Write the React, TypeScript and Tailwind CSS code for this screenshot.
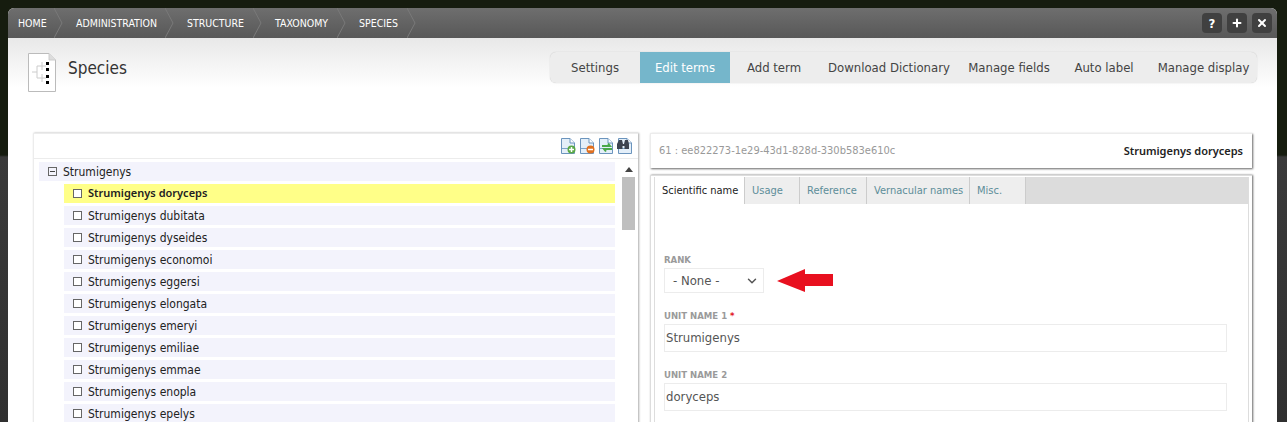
import { ChevronDown, Plus, X } from "lucide-react";

const crumbs = ["HOME", "ADMINISTRATION", "STRUCTURE", "TAXONOMY", "SPECIES"];
const crumbWidths = ["w-[58px]", "w-[111px]", "w-[88px]", "w-[84px]", "w-[70px]"];
const actions = [
    { label: "Settings", width: "w-[90px]" },
    { label: "Edit terms", width: "w-[90px]", active: true },
    { label: "Add term", width: "w-[88px]" },
    { label: "Download Dictionary", width: "w-[142px]" },
    { label: "Manage fields", width: "w-[98px]" },
    { label: "Auto label", width: "w-[92px]" },
    { label: "Manage display", width: "w-[107px]" },
];
const species = [
    "Strumigenys doryceps",
    "Strumigenys dubitata",
    "Strumigenys dyseides",
    "Strumigenys economoi",
    "Strumigenys eggersi",
    "Strumigenys elongata",
    "Strumigenys emeryi",
    "Strumigenys emiliae",
    "Strumigenys emmae",
    "Strumigenys enopla",
    "Strumigenys epelys",
];
const tabs = [
    { label: "Scientific name", width: "w-[90px]", active: true },
    { label: "Usage", width: "w-[55px]" },
    { label: "Reference", width: "w-[67px]" },
    { label: "Vernacular names", width: "w-[103px]" },
    { label: "Misc.", width: "w-[56px]" },
];
const selectedName = "font-['Noto_Sans'] text-[11px] font-semibold";

const DocIcon = ({ children }: { children: React.ReactNode }) => (
    <svg width="16" height="16" viewBox="0 0 16 16">
        <path d="M1.5 .5H10L14.5 5V15.5H1.5Z" fill="#e4eff9" stroke="#6b94bd" />
        <path d="M10 .5V5H14.5" fill="#fff" stroke="#6b94bd" />
        <rect x="2" y="10" width="8" height="1" fill="#7ba4cc" />
        {children}
    </svg>
);

const Field = ({ label, value, required }: { label: string; value: string; required?: boolean }) => (
    <div className="mb-[15px]">
        <div className="h-[14px] text-[9.5px] leading-[16px] font-bold text-[#9a9a9a]">
            {label}
            {required && <span className="text-[#e01020]"> *</span>}
        </div>
        <div className="mt-[2px] flex h-[28px] w-[563px] items-center border border-[#ececec] pl-[1px] text-[13px] text-[#555]">
            {value}
        </div>
    </div>
);

const App = () => {
    return (
        <div
            className="h-screen overflow-hidden bg-[linear-gradient(#161c0f_0,#161c0f_155px,#3a3a3a_157px,#303030_100%)] pt-2 pr-[10px] pl-2 text-[#222]"
            style={{ fontFamily: '"DejaVu Sans Condensed", "DejaVu Sans", Tahoma, sans-serif' }}
        >
            <div className="h-[414px] overflow-hidden rounded-t-md bg-white">
                {/* breadcrumb bar */}
                <div className="flex h-[30px] items-center justify-between bg-[linear-gradient(#6e6e6e,#585858)] pr-[5px] pl-[10px]">
                    <div className="flex">
                        {crumbs.map((crumb, i) => (
                            <div
                                key={crumb}
                                className={`relative flex h-[30px] items-center pt-[1px] text-[10.5px] text-white ${crumbWidths[i]}`}
                            >
                                {crumb}
                                <svg width="9" height="30" viewBox="0 0 9 30" className="absolute top-0 right-[13px]">
                                    <path d="M0 0L8 15L0 30" fill="none" stroke="#797979" />
                                </svg>
                            </div>
                        ))}
                    </div>
                    <div className="flex gap-[5px]">
                        <div className="flex h-5 w-5 items-center justify-center rounded-[4px] bg-[#404040] text-[13px] leading-none font-bold text-white">
                            ?
                        </div>
                        <div className="flex h-5 w-5 items-center justify-center rounded-[4px] bg-[#404040] text-white">
                            <Plus size={12} strokeWidth={4} />
                        </div>
                        <div className="flex h-5 w-5 items-center justify-center rounded-[4px] bg-[#404040] text-white">
                            <X size={12} strokeWidth={4} />
                        </div>
                    </div>
                </div>

                {/* title and action tabs */}
                <div className="flex h-[50px] items-start justify-between bg-[linear-gradient(#e8e8e8,#fff)] pt-[14px] pr-5 pl-5">
                    <div className="flex items-start gap-[12px]">
                        <svg width="28" height="39" viewBox="0 0 28 39" className="mt-[1px]">
                            <path d="M.5 .5H21L27.5 7V38.5H.5Z" fill="#fff" stroke="#bbb" />
                            <path d="M21 .5V7H27.5" fill="#ddd" stroke="#ccc" />
                            <path d="M4 19H9M9 13V25M9 13H18M9 25H18M14 9V17M14 21V29" stroke="#ccc" fill="none" />
                            <rect x="18" y="9" width="3" height="3" />
                            <rect x="18" y="15" width="3" height="3" />
                            <rect x="18" y="22" width="3" height="3" />
                            <rect x="18" y="28" width="3" height="3" />
                        </svg>
                        <h1 className="mt-[4px] text-[17px] text-[#333]">Species</h1>
                    </div>
                    <div className="flex h-[31px] items-center overflow-hidden rounded-md bg-[#ededed] shadow-[0_0_1px_#bbb]">
                        {actions.map((a) => (
                            <div
                                key={a.label}
                                className={`flex h-[31px] items-center justify-center text-[13px] ${a.width} ${
                                    a.active ? "bg-[#75b6cb] text-white" : "text-[#444]"
                                }`}
                            >
                                {a.label}
                            </div>
                        ))}
                    </div>
                </div>

                {/* two panes */}
                <div className="mt-[45px] flex pl-[25px]">
                    <div className="h-[300px] w-[605px] shrink-0 border-t border-l border-[#ececec] shadow-[1px_0_2px_#aaa]">
                        <div className="flex h-[25px] items-center justify-end gap-[3px] border-b border-[#ececec] pr-[5px]">
                            <DocIcon>
                                <circle cx="11.5" cy="11.5" r="4" fill="#5aa846" />
                                <path d="M9 11.5H14M11.5 9V14" stroke="#fff" strokeWidth="1.5" />
                            </DocIcon>
                            <DocIcon>
                                <circle cx="11.5" cy="11.5" r="4" fill="#e07020" />
                                <path d="M9 11.5H14" stroke="#fff" strokeWidth="1.5" />
                            </DocIcon>
                            <DocIcon>
                                <path d="M4 8H12L10 5.5M14 11H6L8 13.5" fill="none" stroke="#4aa84a" strokeWidth="2" />
                            </DocIcon>
                            <DocIcon>
                                <path d="M0 11V6L2 2H5L6 6H7L8 2H11L12 6V11H7.5V8H5.5V11Z" fill="#3d4450" />
                            </DocIcon>
                        </div>
                        <div className="flex">
                            <div className="w-[581px] pt-[3px] pl-[5px] text-[12px]">
                                <div className="flex h-[19px] items-center bg-[#f3f3fc] pl-[9px]">
                                    <span className="mr-[6px] flex h-[9px] w-[9px] items-center justify-center border border-[#666]">
                                        <span className="h-px w-[5px] bg-[#444]" />
                                    </span>
                                    Strumigenys
                                </div>
                                <div className="pl-[25px]">
                                    {species.map((name, i) => (
                                        <div
                                            key={name}
                                            className={`mt-[3px] flex h-[19px] items-center pl-[9px] ${
                                                i === 0 ? `bg-[#ffff88] ${selectedName}` : "bg-[#f3f3fc]"
                                            }`}
                                        >
                                            <span className="mr-[6px] h-[9px] w-[9px] border border-[#666] bg-white" />
                                            {name}
                                        </div>
                                    ))}
                                </div>
                            </div>
                            <div className="ml-[7px] flex w-[13px] flex-col items-center">
                                <div className="mt-[8px] h-0 w-0 border-x-[4px] border-b-[5px] border-x-transparent border-b-[#444]" />
                                <div className="mt-[5px] h-[53px] w-[13px] bg-[#bfbfbf]" />
                            </div>
                        </div>
                    </div>

                    <div className="ml-[12px] w-[602px] shrink-0">
                        <div className="flex h-[35px] items-center justify-between border-t border-l border-[#ececec] pr-[9px] pl-2 shadow-[1px_1px_2px_#666]">
                            <span className="text-[11px] text-[#999]">61 : ee822273-1e29-43d1-828d-330b583e610c</span>
                            <span className={selectedName}>Strumigenys doryceps</span>
                        </div>
                        <div className="mt-[7px] h-[300px] border-t border-l border-[#ddd] px-[3px] pt-[1px] shadow-[1px_0_2px_#666]">
                            <div className="h-full border-x border-[#ddd]">
                                <div className="flex h-[27px] bg-[#dcdcdc]">
                                    {tabs.map((t) => (
                                        <div
                                            key={t.label}
                                            className={`flex items-center border-r border-[#ccc] pt-[2px] pl-[7px] text-[11px] ${t.width} ${
                                                t.active ? "bg-white text-[#222]" : "bg-[#eee] text-[#5d8d99]"
                                            }`}
                                        >
                                            {t.label}
                                        </div>
                                    ))}
                                </div>
                                <div className="pt-[48px] pl-[9px]">
                                    <div className="mb-[15px]">
                                        <div className="h-[14px] text-[9.5px] leading-[16px] font-bold text-[#9a9a9a]">
                                            RANK
                                        </div>
                                        <div className="mt-[2px] flex items-center">
                                            <div className="flex h-[25px] w-[100px] items-center justify-between border border-[#ececec] pr-[4px] pl-2 text-[13px] text-[#555]">
                                                - None -
                                                <ChevronDown size={14} strokeWidth={2.5} />
                                            </div>
                                            <svg width="56" height="23" viewBox="0 0 56 23" className="ml-[13px]">
                                                <path d="M0 12L28 0V5H56V17H28V23Z" fill="#e8101f" />
                                            </svg>
                                        </div>
                                    </div>
                                    <Field label="UNIT NAME 1" value="Strumigenys" required />
                                    <Field label="UNIT NAME 2" value="doryceps" />
                                </div>
                            </div>
                        </div>
                    </div>
                </div>
            </div>
        </div>
    );
};

export default App;
